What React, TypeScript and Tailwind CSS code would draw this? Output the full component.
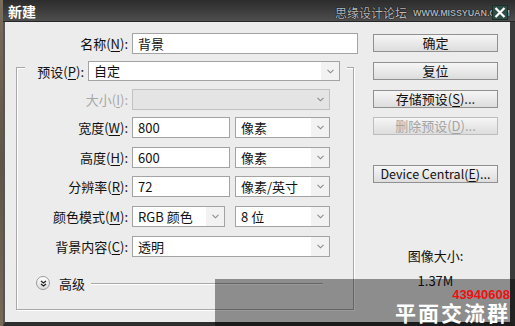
import React from 'react';

const FONT = "font-['Noto_Sans_CJK_SC','Noto_Sans',sans-serif]";

const Chevron: React.FC = () => (
  <svg width="7" height="5" viewBox="0 0 7 5" className="text-[#8a8a8a]">
    <path d="M0.5 0.8 L3.5 3.8 L6.5 0.8" fill="none" stroke="currentColor" strokeWidth="1.1" />
  </svg>
);

const Key: React.FC<{ k: string }> = ({ k }) => (
  <>
    (<span className="underline underline-offset-2">{k}</span>)
  </>
);

const Label: React.FC<{ text: string; k: string; w: string; disabled?: boolean }> = ({ text, k, w, disabled }) => (
  <div className={`${w} shrink-0 text-right text-[13px] leading-none ${disabled ? 'text-[#a8a8a8]' : 'text-[#111]'}`}>
    {text}
    <Key k={k} />:
  </div>
);

const Input: React.FC<{ value: string; w: string }> = ({ value, w }) => (
  <div className={`${w} h-[21px] shrink-0 bg-white border border-[#a3a3a3] flex items-center pl-[5px] text-[13px] text-[#111]`}>
    {value}
  </div>
);

const Select: React.FC<{ value?: string; w: string; h?: string; disabled?: boolean }> = ({ value, w, h = 'h-[21px]', disabled }) => (
  <div
    className={`${w} ${h} shrink-0 flex border ${
      disabled ? 'bg-[#e4e4e4] border-[#c2c2c2]' : 'bg-white border-[#a3a3a3]'
    }`}
  >
    <div className="flex-1 flex items-center pl-[5px] text-[13px] text-[#111]">{value}</div>
    <div className={`w-[18px] flex items-center justify-center ${disabled ? '' : 'bg-[#f2f2f2]'}`}>
      <Chevron />
    </div>
  </div>
);

const Button: React.FC<{ children: React.ReactNode; disabled?: boolean; className?: string }> = ({ children, disabled, className = '' }) => (
  <div
    className={`w-[125px] h-[18px] flex items-center justify-center text-[13px] border bg-gradient-to-b from-[#f6f6f6] to-[#dddddd] ${
      disabled ? 'border-[#bdbdbd] text-[#a4a4a4]' : 'border-[#909090] text-[#111]'
    } ${className}`}
  >
    {children}
  </div>
);

export default function App() {
  return (
    <div className={`relative w-[515px] h-[326px] overflow-hidden flex bg-[#3a3a3a] ${FONT}`}>
      {/* textured desktop strip */}
      <div className="w-[3px] shrink-0 bg-gradient-to-b from-[#7a6d5c] via-[#5e5548] to-[#766a58]" />
      <div className="flex-1 flex flex-col">
        {/* title bar */}
        <div className="h-[22px] shrink-0 bg-gradient-to-b from-[#2c2c2c] to-[#4e4e4e] flex items-center pl-[5px] pr-[5px] border-b border-[#262626]">
          <span className="text-white font-bold text-[14px] leading-none">新建</span>
          <span className="ml-auto mt-[5px] text-[12px] leading-none text-[#b9b9b9] [text-shadow:0_0_1px_#000,0_0_1px_#000]">
            思缘设计论坛
          </span>
          <span className="ml-[6px] mt-[6px] font-['Liberation_Sans',sans-serif] font-bold text-[9px] leading-none tracking-[-0.1px] text-[#b0b0b0] [text-shadow:0_0_1px_#000,0_0_1px_#000]">
            WWW.MISSYUAN.COM
          </span>
        </div>
        {/* body */}
        <div className="flex-1 flex bg-[#ececec] border-l-2 border-l-[#555] border-r-[5px] border-r-[#3a3a3a] border-b-4 border-b-[#2e2e2e]">
          {/* left column */}
          <div className="w-[356px] shrink-0 flex flex-col pt-[11px]">
            <div className="flex items-center gap-[4px]">
              <Label text="名称" k="N" w="w-[123px]" />
              <Input value="背景" w="w-[226px]" />
            </div>
            {/* group box */}
            <div className="ml-[11px] mt-[13px] w-[338px] h-[243px] border border-[#a8a8a8] shadow-[inset_1px_1px_0_#fff,1px_1px_0_#fff] flex flex-col">
              <div className="-mt-[7px] ml-[8px] w-[322px] pr-[7px] bg-[#ececec] flex items-center gap-[4px]">
                <Label text="预设" k="P" w="w-[59px]" />
                <Select value="自定" w="w-[252px]" h="h-[20px]" />
              </div>
              <div className="mt-[8px] flex items-center gap-[4px]">
                <Label text="大小" k="I" w="w-[111px]" disabled />
                <Select w="w-[198px]" disabled />
              </div>
              <div className="mt-[7px] flex items-center gap-[4px]">
                <Label text="宽度" k="W" w="w-[111px]" />
                <Input value="800" w="w-[98px]" />
                <div className="ml-[1px]">
                  <Select value="像素" w="w-[95px]" />
                </div>
              </div>
              <div className="mt-[9px] flex items-center gap-[4px]">
                <Label text="高度" k="H" w="w-[111px]" />
                <Input value="600" w="w-[98px]" />
                <div className="ml-[1px]">
                  <Select value="像素" w="w-[95px]" />
                </div>
              </div>
              <div className="mt-[8px] flex items-center gap-[4px]">
                <Label text="分辨率" k="R" w="w-[111px]" />
                <Input value="72" w="w-[98px]" />
                <div className="ml-[1px]">
                  <Select value="像素/英寸" w="w-[95px]" />
                </div>
              </div>
              <div className="mt-[9px] flex items-center gap-[4px]">
                <Label text="颜色模式" k="M" w="w-[111px]" />
                <Select value="RGB 颜色" w="w-[93px]" />
                <div className="ml-[6px]">
                  <Select value="8 位" w="w-[95px]" />
                </div>
              </div>
              <div className="mt-[9px] flex items-center gap-[4px]">
                <Label text="背景内容" k="C" w="w-[111px]" />
                <Select value="透明" w="w-[198px]" />
              </div>
              <div className="mt-[19px] ml-[19px] flex items-center">
                <div className="w-[14px] h-[14px] rounded-full border border-[#9a9a9a] bg-gradient-to-b from-white to-[#dcdcdc] flex items-center justify-center">
                  <svg width="7" height="7" viewBox="0 0 7 7">
                    <path d="M1 1 L3.5 3 L6 1 M1 4 L3.5 6 L6 4" fill="none" stroke="#222" strokeWidth="1.3" />
                  </svg>
                </div>
                <span className="ml-[9px] text-[13px] leading-none text-[#111]">高级</span>
                <div className="ml-[6px] w-[232px] h-px bg-[#a8a8a8] shadow-[0_1px_0_#fff]" />
              </div>
            </div>
          </div>
          {/* right column */}
          <div className="ml-[12px] pt-[12px] flex flex-col">
            <div className="flex flex-col gap-[10px]">
              <Button>确定</Button>
              <Button>复位</Button>
              <Button>
                存储预设<Key k="S" />...
              </Button>
            </div>
            <Button disabled className="mt-[9px]">
              删除预设<Key k="D" />...
            </Button>
            <Button className="mt-[30px] !text-[12.5px]">
              Device Central<Key k="E" />...
            </Button>
            <div className="mt-[66px] text-center text-[13px] leading-none text-[#111]">图像大小:</div>
            <div className="mt-[12px] text-center text-[13px] leading-none text-[#111]">1.37M</div>
          </div>
        </div>
      </div>

      {/* close button */}
      <div className="absolute left-[492px] top-[5px] w-[16px] h-[15px] bg-[#2f4d47] border border-[#1c2e2a] flex items-center justify-center">
        <svg width="12" height="11" viewBox="0 0 12 11">
          <path d="M1.5 1 L10.5 10 M10.5 1 L1.5 10" stroke="#fff" strokeWidth="2.2" />
        </svg>
      </div>

      {/* watermark overlay */}
      <div className="absolute left-[215px] top-[279px] right-0 bottom-0 bg-black/40 flex flex-col items-end pr-[5px] pt-[10px]">
        <span className="font-['Liberation_Sans',sans-serif] font-bold text-[13px] leading-[12px] text-[#ee1111]">43940608</span>
        <span className="mt-[1px] font-bold text-[21px] leading-[21px] tracking-[2px] text-white">平面交流群</span>
      </div>
    </div>
  );
}
